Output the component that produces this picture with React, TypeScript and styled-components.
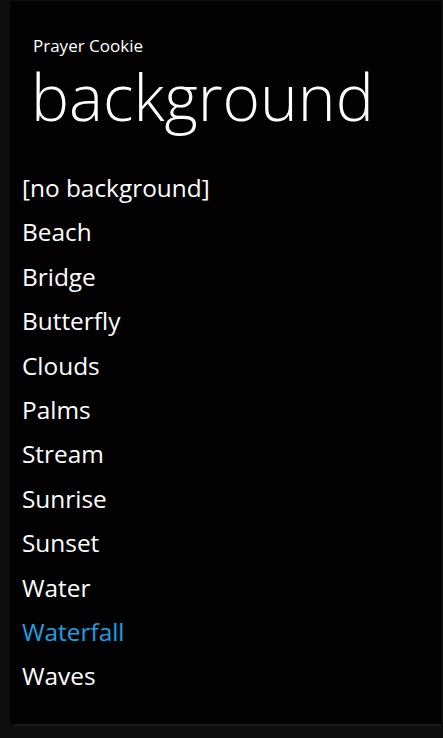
import React from "react";
import styled, { createGlobalStyle } from "styled-components";

const Global = createGlobalStyle`
  html, body { margin: 0; padding: 0; background: #0e0e0e; }
  body { width: 443px; height: 738px; overflow: hidden; }
`;

const Frame = styled.div`
  width: 443px;
  height: 738px;
  box-sizing: border-box;
  padding: 1px 2px 0 10px;
  background: #0e0e0e;
  display: flex;
  flex-direction: column;
`;

const Screen = styled.main`
  flex: 1;
  background: #020202;
  display: flex;
  flex-direction: column;
  font-family: "Open Sans", "Noto Sans", sans-serif;
  color: #ffffff;
`;

const Header = styled.header`
  padding: 35px 0 0 23px;
  display: flex;
  flex-direction: column;
`;

const AppName = styled.div`
  font-size: 17px;
  line-height: 20px;
`;

const PageTitle = styled.h1`
  margin: 0 0 0 -2px;
  font-size: 64px;
  font-weight: 300;
  line-height: 82px;
`;

const List = styled.ul`
  list-style: none;
  margin: 0;
  padding: 28px 0 0 12px;
  display: flex;
  flex-direction: column;
`;

const Item = styled.li<{ $selected?: boolean }>`
  font-size: 24.4px;
  line-height: 44.4px;
  color: ${(p) => (p.$selected ? "#1ba1e2" : "#ffffff")};
`;

const BottomBar = styled.div`
  height: 12px;
  margin-left: 3px;
  border-top: 2px solid #1a1a1a;
  background: #0e0e0e;
`;

const items = [
  "[no background]",
  "Beach",
  "Bridge",
  "Butterfly",
  "Clouds",
  "Palms",
  "Stream",
  "Sunrise",
  "Sunset",
  "Water",
  "Waterfall",
  "Waves",
];

export default function App() {
  return (
    <>
      <Global />
      <Frame>
        <Screen>
          <Header>
            <AppName>Prayer Cookie</AppName>
            <PageTitle>background</PageTitle>
          </Header>
          <List>
            {items.map((it) => (
              <Item key={it} $selected={it === "Waterfall"}>
                {it}
              </Item>
            ))}
          </List>
        </Screen>
        <BottomBar />
      </Frame>
    </>
  );
}
